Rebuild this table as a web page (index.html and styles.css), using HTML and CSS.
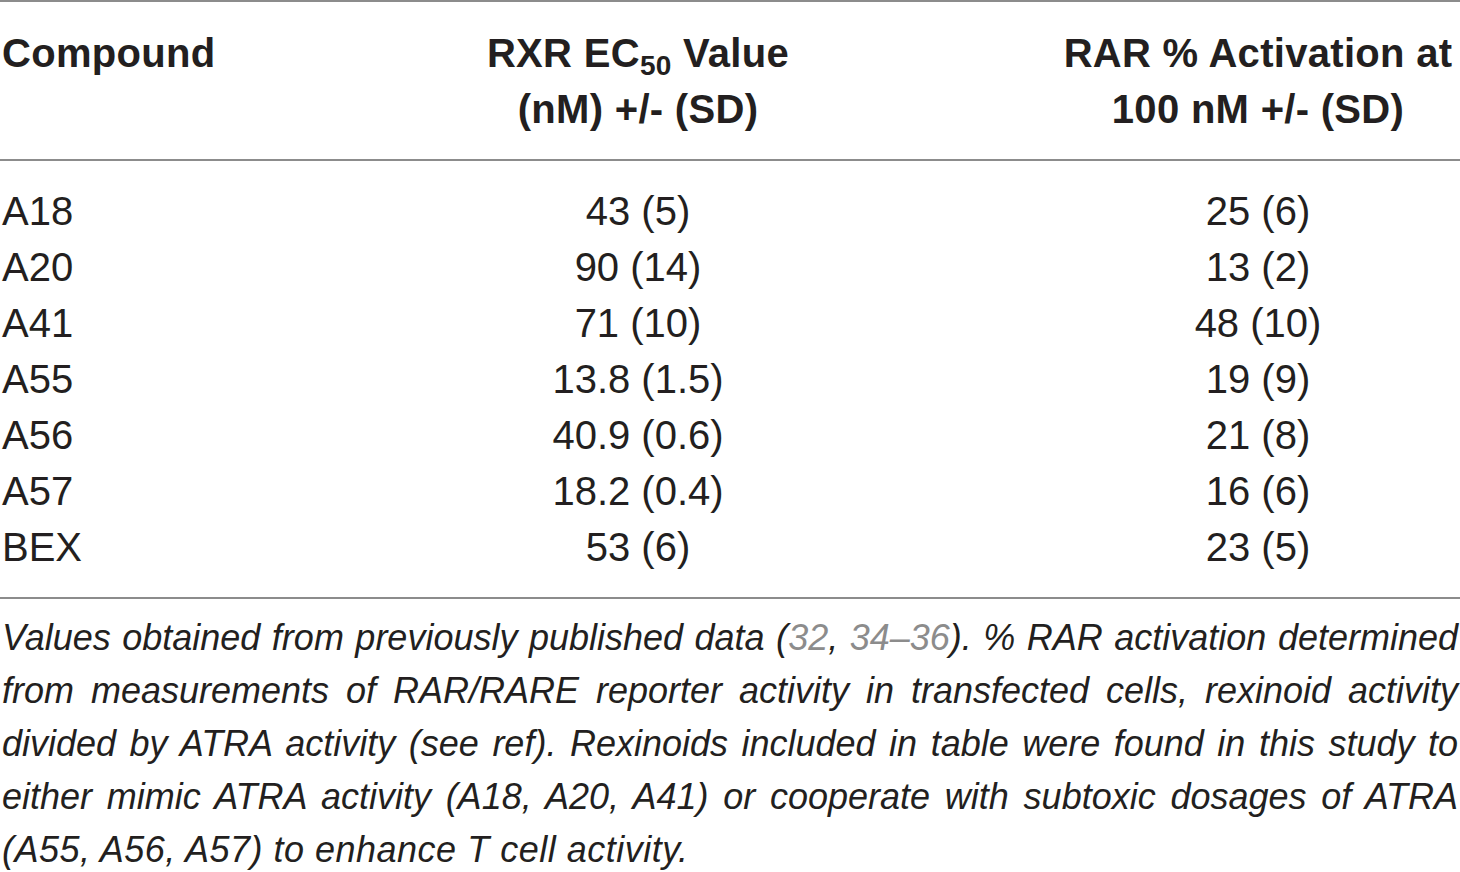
FILE: index.html
```html
<!DOCTYPE html>
<html>
<head>
  <meta charset="UTF-8">
  <title>Rexinoid activity</title>
  <link rel="stylesheet" href="styles.css">
</head>
<body>
<table class="results">
  <colgroup>
    <col class="colName">
    <col class="colRxr">
    <col class="colRar">
  </colgroup>
  <thead>
    <tr>
      <th class="name">Compound</th>
      <th class="rxr">RXR EC<sub>50</sub> Value<br>(nM) +/- (SD)</th>
      <th class="rar">RAR % Activation at<br>100 nM +/- (SD)</th>
    </tr>
  </thead>
  <tbody>
    <tr><td class="name">A18</td><td class="rxr">43 (5)</td><td class="rar">25 (6)</td></tr>
    <tr><td class="name">A20</td><td class="rxr">90 (14)</td><td class="rar">13 (2)</td></tr>
    <tr><td class="name">A41</td><td class="rxr">71 (10)</td><td class="rar">48 (10)</td></tr>
    <tr><td class="name">A55</td><td class="rxr">13.8 (1.5)</td><td class="rar">19 (9)</td></tr>
    <tr><td class="name">A56</td><td class="rxr">40.9 (0.6)</td><td class="rar">21 (8)</td></tr>
    <tr><td class="name">A57</td><td class="rxr">18.2 (0.4)</td><td class="rar">16 (6)</td></tr>
    <tr><td class="name">BEX</td><td class="rxr">53 (6)</td><td class="rar">23 (5)</td></tr>
  </tbody>
</table>
<p class="note">
  <span class="line">Values obtained from previously published data (<a href="#">32</a>, <a href="#">34–36</a>). % RAR activation determined</span>
  <span class="line">from measurements of RAR/RARE reporter activity in transfected cells, rexinoid activity</span>
  <span class="line">divided by ATRA activity (see ref). Rexinoids included in table were found in this study to</span>
  <span class="line">either mimic ATRA activity (A18, A20, A41) or cooperate with subtoxic dosages of ATRA</span>
  <span class="line last">(A55, A56, A57) to enhance T cell activity.</span>
</p>
</body>
</html>
```

FILE: styles.css
```css
body {
  margin: 0;
  background: #fff;
  color: #231f20;
  font-family: 'Liberation Sans', Arial, sans-serif;
}
.results {
  width: 1460px;
  border-collapse: collapse;
  border-top: 2px solid #8c8c8c;
  border-bottom: 2px solid #8c8c8c;
}
.colName {
  width: 318px;
}
.colRxr {
  width: 640px;
}
.colRar {
  width: 502px;
}
.results th,
.results td {
  padding: 0;
  font-size: 40px;
  line-height: 56px;
  white-space: nowrap;
}
.results th {
  font-weight: bold;
  vertical-align: top;
  padding-top: 23px;
  padding-bottom: 22px;
  border-bottom: 2px solid #8c8c8c;
  letter-spacing: 0.3px;
}
.results td {
  font-weight: normal;
}
.results tbody tr:first-child td {
  padding-top: 22px;
}
.results tbody tr:last-child td {
  padding-bottom: 22px;
}
.results .name {
  text-align: left;
  padding-left: 2px;
}
.results .rxr {
  text-align: center;
}
.results .rar {
  text-align: center;
  padding-left: 100px;
  padding-right: 2px;
}
.results sub {
  font-size: 70%;
  line-height: 0;
  vertical-align: -0.3em;
}
.note {
  margin: 0;
  padding: 12px 2px 0 2px;
  font-size: 36px;
  line-height: 53px;
  font-style: italic;
  word-spacing: -2px;
}
.note .line {
  display: block;
  text-align: justify;
  text-align-last: justify;
}
.note .line.last {
  text-align-last: left;
  word-spacing: 0;
  letter-spacing: 0.5px;
}
.note a {
  color: #8c8c8c;
  text-decoration: none;
}
```
